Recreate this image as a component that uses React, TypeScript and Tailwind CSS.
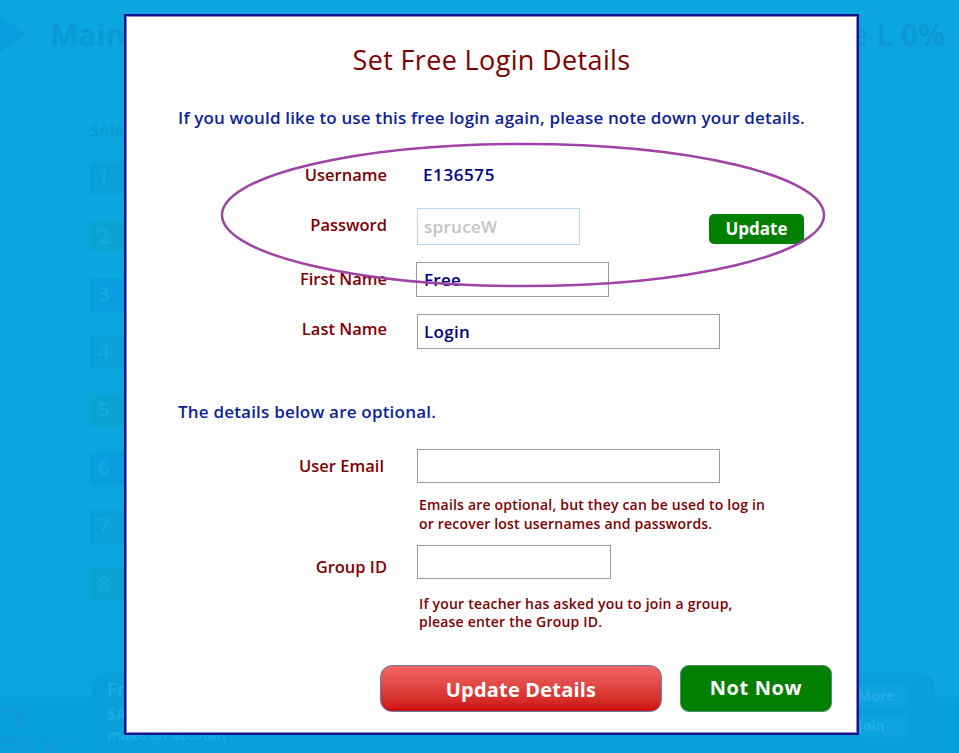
const font = { fontFamily: '"Open Sans", Lato, sans-serif' }

function Field({ label, children, labelClass = '' }: { label: string; children: React.ReactNode; labelClass?: string }) {
  return (
    <div className="flex items-center">
      <div className={`w-[261px] shrink-0 text-right text-[16.5px] font-semibold text-[#800000] ${labelClass}`}>{label}</div>
      <div className="ml-[30px] flex flex-1 items-center">{children}</div>
    </div>
  )
}

function Background() {
  const nums = ['1', '2', '3', '4', '5', '6', '7', '8']
  return (
    <div className="flex h-full w-full flex-col">
      <div className="flex h-[68px] items-center justify-between pr-[14px]">
        <div className="flex items-center">
          <svg width="26" height="36" viewBox="0 0 26 36">
            <path d="M0 0 L26 18 L0 36 Z" fill="#0a9ddd" />
          </svg>
          <span className="ml-[24px] text-[30px] font-bold text-[#0c99d3]">Main Menu</span>
        </div>
        <span className="text-[30px] font-bold text-[#0c99d3]">Grade L 0%</span>
      </div>
      <div className="flex flex-1 pl-[90px]">
        <div className="flex flex-col pt-[50px]">
          <span className="text-[17px] font-bold text-[#0c9ad4]">Select a level</span>
          <div className="mt-[18px] flex flex-col gap-[25px]">
            {nums.map((n, i) => (
              <div
                key={n}
                className={`flex h-[33px] w-[60px] items-center pl-[8px] text-[20px] text-[#19acdf] ${
                  i % 3 === 1 ? 'bg-[#0aa3d4]' : i % 3 === 2 ? 'bg-[#099fdf]' : 'bg-[#0ba0d8]'
                }`}
              >
                {n}
              </div>
            ))}
          </div>
        </div>
      </div>
      <div className="flex h-[80px]">
        <div className="mt-[24px] flex w-[92px] items-end overflow-hidden bg-[#06a0dc]">
          <div className="ml-[-62px] flex shrink-0 flex-col text-[26px] font-bold leading-[26px] text-[#0e9ad5]">
            <span>Mighty</span>
            <span className="ml-[12px]">Maestro</span>
          </div>
        </div>
        <div className="flex flex-1 rounded-t-[14px] bg-[#089fdc] px-[15px] pt-[4px]">
          <div className="flex flex-col text-[#23aee4]">
            <span className="text-[20px] leading-[26px]">Free Login</span>
            <span className="text-[16px] font-bold leading-[22px] text-[#1aa9e2]">SAVE your progress</span>
            <span className="text-[14px] font-bold leading-[20px] text-[#1aa9e2]">make an account</span>
          </div>
          <div className="ml-auto mr-[12px] mt-[8px] flex flex-col gap-[8px]">
            <div className="h-[22px] w-[50px] rounded-[4px] bg-[#0ba4e0] text-[14px] font-bold text-[#23aee4]">More</div>
            <div className="h-[22px] w-[50px] rounded-[4px] bg-[#0ba4e0] text-[14px] font-bold text-[#23aee4]">Join</div>
          </div>
        </div>
        <div className="mt-[24px] w-[24px] bg-[#06a0dc]" />
      </div>
    </div>
  )
}

export default function App() {
  return (
    <div className="relative h-[753px] w-[959px] overflow-hidden bg-[#0ba6df]" style={font}>
      <Background />

      <div className="absolute left-[124px] top-[14px] h-[721px] w-[735px] border-2 border-[#15108c] bg-white shadow-[inset_0_0_0_1px_#8a86d2]">
        <div className="flex flex-col pt-[28px]">
          <h1 className="text-center text-[27px] font-medium leading-[32px] tracking-[0.35px] text-[#7f0000]">
            Set Free Login Details
          </h1>
          <p className="mt-[31px] text-center text-[17px] font-semibold leading-[22px] tracking-[0.15px] text-[#0c1f9a]">
            If you would like to use this free login again, please note down your details.
          </p>

          <div className="mt-[28px] flex h-[36px] items-center">
            <Field label="Username">
              <span className="ml-[6px] text-[17px] font-semibold tracking-[0.6px] text-[#000080]">E136575</span>
            </Field>
          </div>

          <div className="mt-[15px] flex items-center justify-between pr-[53px]">
            <Field label="Password" labelClass="-mt-[3px]">
              <div className="flex h-[37px] w-[163px] items-center border border-[#b9d6f2] px-[6px] text-[17px] font-semibold tracking-[0.3px] text-[#c4c4c4]">
                spruceW
              </div>
            </Field>
            <button className="mt-[4px] h-[30px] w-[95px] rounded-[5px] bg-[#007f00] text-[17px] font-bold text-white">
              Update
            </button>
          </div>

          <div className="mt-[17px]">
            <Field label="First Name">
              <div className="-ml-[1px] flex h-[35px] w-[193px] items-center border border-[#9c9c9c] px-[7px] text-[17px] font-semibold tracking-[0.3px] text-[#000080]">
                Free
              </div>
            </Field>
          </div>

          <div className="mt-[17px]">
            <Field label="Last Name" labelClass="-mt-[4px]">
              <div className="flex h-[35px] w-[303px] items-center border border-[#9c9c9c] px-[6px] text-[17px] font-semibold tracking-[0.3px] text-[#000080]">
                Login
              </div>
            </Field>
          </div>

          <p className="ml-[52px] mt-[52px] text-[17px] font-semibold leading-[22px] tracking-[0.2px] text-[#0c1f9a]">
            The details below are optional.
          </p>

          <div className="mt-[26px]">
            <Field label="User Email" labelClass="pr-[3px]">
              <div className="h-[34px] w-[303px] border border-[#9c9c9c]" />
            </Field>
          </div>
          <p className="ml-[293px] mt-[12px] text-[14px] font-semibold leading-[19px] tracking-[0.2px] text-[#800000]">
            Emails are optional, but they can be used to log in
            <br />
            or recover lost usernames and passwords.
          </p>

          <div className="mt-[12px]">
            <Field label="Group ID" labelClass="mt-[10px]">
              <div className="h-[34px] w-[194px] border border-[#9c9c9c]" />
            </Field>
          </div>
          <p className="ml-[293px] mt-[15px] text-[14px] font-semibold leading-[18px] tracking-[0.2px] text-[#800000]">
            If your teacher has asked you to join a group,
            <br />
            please enter the Group ID.
          </p>

          <div className="mt-[34px] flex gap-[18px] pl-[254px]">
            <button className="h-[47px] w-[282px] rounded-[12px] border border-[#6a7fae] bg-gradient-to-b from-[#f06565] to-[#cc0a0a] pt-[3px] text-[20px] font-bold tracking-[0.2px] text-white">
              Update Details
            </button>
            <button className="h-[47px] w-[152px] rounded-[9px] border border-[#4f8f6a] bg-[#007f00] text-[20px] font-bold tracking-[0.6px] text-white">
              Not Now
            </button>
          </div>
        </div>

        <svg className="pointer-events-none absolute left-0 top-0" width="735" height="721">
          <ellipse cx="397" cy="199" rx="301" ry="71" fill="none" stroke="#a043a6" strokeWidth="2.5" />
        </svg>
      </div>
    </div>
  )
}
